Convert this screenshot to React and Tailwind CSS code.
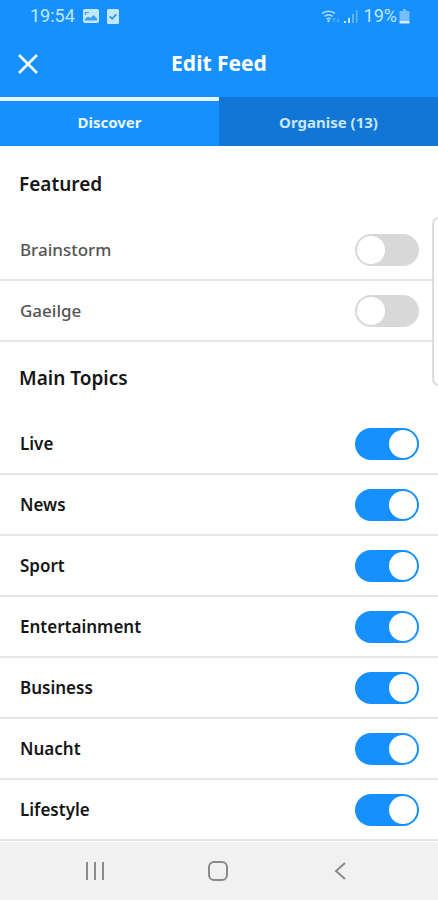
import { useState } from "react";

const sections = [
  { title: "Featured", topics: ["Brainstorm", "Gaeilge"] },
  {
    title: "Main Topics",
    topics: ["Live", "News", "Sport", "Entertainment", "Business", "Nuacht", "Lifestyle"],
  },
];

function StatusBar() {
  return (
    <div className="flex h-8 items-center justify-between pr-7 pl-[30px] font-[Roboto,sans-serif] text-lg text-[#c3e7ff]">
      <div className="flex items-center gap-2">
        <span>19:54</span>
        <svg width="16" height="14" viewBox="0 0 16 14" aria-hidden="true">
          <rect width="16" height="14" rx="2" fill="#c3e7ff" />
          <path d="M2 11.500V10l3-2.500 2.500 1.500L10.500 6 14 9.500v2z" fill="#3d9ff5" />
          <path d="M2.500 6V3.500H6" fill="none" stroke="#3d9ff5" strokeWidth="1.200" />
        </svg>
        <svg width="12" height="15" viewBox="0 0 12 15" aria-hidden="true">
          <rect width="12" height="15" rx="1.500" fill="#c3e7ff" />
          <path d="M2.800 7.200l2.400 2.600 4.200-4.600" fill="none" stroke="#1690ff" strokeWidth="1.600" />
        </svg>
      </div>
      <div className="flex items-center gap-1">
        <svg width="18" height="13" viewBox="0 0 18 13" fill="none" aria-hidden="true">
          <path d="M0 3.500Q6.500 -1 13 3.500M2.500 6.400Q6.500 3.200 10.500 6.400M4.500 9Q6.500 7.600 8.500 9" stroke="#a5d8ff" strokeWidth="1.700" />
          <circle cx="6.500" cy="11" r="1.200" fill="#a5d8ff" />
          <path d="M12 12V8M10.500 9.500L12 8l1.500 1.500M16 8v4M14.500 10.500L16 12l1.500-1.500" stroke="#58b1ff" strokeWidth="1" />
        </svg>
        <svg width="14" height="14" viewBox="0 0 14 14" aria-hidden="true">
          <path d="M0 12h2v2H0zM4 9h2v5H4z" fill="#c3e7ff" />
          <path d="M8 5h2v9H8zM12 1h1.500v13H12z" fill="#5fb5ff" />
        </svg>
        <div className="flex items-center gap-0.5 pl-0.5">
          <span>19%</span>
          <svg width="11" height="15" viewBox="0 0 11 15" aria-hidden="true">
            <path d="M4 0h3v2h2.500q1 0 1 1v8h-10V3q0-1 1-1H4z" fill="#73bfff" />
            <path d="M.5 11.500h10v3H.5z" fill="#d5efff" />
          </svg>
        </div>
      </div>
    </div>
  );
}

function TopicRow({ name, on, onToggle }) {
  return (
    <label
      className={`flex h-[61px] items-center justify-between border-b-2 border-[#e6e6e6] pr-[19px] pl-5 text-[17px] ${
        on ? "font-semibold text-[#161616]" : "font-medium text-[#555555]"
      }`}
    >
      {name}
      <input
        type="checkbox"
        role="switch"
        checked={on}
        onChange={onToggle}
        className="h-8 w-16 appearance-none rounded-full bg-[#d8d8d8] p-0.5 before:block before:size-7 before:rounded-full before:bg-white checked:bg-[#1690ff] checked:before:ml-8"
      />
    </label>
  );
}

export default function App() {
  const [enabled, setEnabled] = useState(() => new Set(sections[1].topics));
  const [tab, setTab] = useState("discover");

  const toggle = (name) => {
    const next = new Set(enabled);
    if (!next.delete(name)) next.add(name);
    setEnabled(next);
  };

  const tabClass = (id) =>
    `h-[49px] border-t-4 pb-0.5 text-[15px] font-bold ${
      tab === id
        ? "border-[#eaf6ff] bg-[#1690ff] text-[#eaf6ff]"
        : "border-[#1176d6] bg-[#1176d6] text-[#c9e6ff]"
    }`;

  return (
    <div className="relative flex min-h-screen flex-col overflow-hidden bg-white font-['Noto_Sans',sans-serif]">
      <header className="bg-[#1690ff]">
        <StatusBar />
        <div className="grid h-[65px] grid-cols-[40px_1fr_40px] items-center px-2 pb-0.5">
          <button type="button" aria-label="Close" className="flex size-10 items-center justify-center">
            <svg width="20" height="20" viewBox="0 0 20 20" aria-hidden="true">
              <path d="M1 1l18 18M19 1L1 19" stroke="white" strokeWidth="2.500" />
            </svg>
          </button>
          <h1 className="text-center text-[21px] font-bold text-white">Edit Feed</h1>
        </div>
        <div role="tablist" className="grid grid-cols-2">
          <button type="button" role="tab" aria-selected={tab === "discover"} onClick={() => setTab("discover")} className={tabClass("discover")}>
            Discover
          </button>
          <button type="button" role="tab" aria-selected={tab === "organise"} onClick={() => setTab("organise")} className={tabClass("organise")}>
            Organise (13)
          </button>
        </div>
      </header>

      <main className="flex-1 pt-0.5">
        {sections.map((section) => (
          <section key={section.title}>
            <h2 className="flex h-[72px] items-center px-[19px] text-[19px] font-semibold text-[#161616]">
              {section.title}
            </h2>
            {section.topics.map((name) => (
              <TopicRow key={name} name={name} on={enabled.has(name)} onToggle={() => toggle(name)} />
            ))}
          </section>
        ))}
      </main>

      <div className="absolute top-[217px] -right-2 h-[169px] w-3.5 rounded-lg border-2 border-[#dddddd] bg-white/80" />

      <nav className="grid h-[58px] grid-cols-[1fr_56px_1fr] items-center bg-[#f1f1f1] text-[#8a8a8a]">
        <button type="button" aria-label="Recent apps" className="flex justify-end pr-[86px]">
          <svg width="20" height="18" viewBox="0 0 20 18" stroke="currentColor" strokeWidth="2" aria-hidden="true">
            <path d="M2 0v18M10 0v18M18 0v18" />
          </svg>
        </button>
        <button type="button" aria-label="Home" className="flex justify-center pr-0.5">
          <svg width="22" height="22" viewBox="0 0 22 22" fill="none" stroke="currentColor" strokeWidth="2" aria-hidden="true">
            <rect x="2" y="2" width="18" height="18" rx="5" />
          </svg>
        </button>
        <button type="button" aria-label="Back" className="flex pl-[87px]">
          <svg width="12" height="18" viewBox="0 0 12 18" fill="none" stroke="currentColor" strokeWidth="2" aria-hidden="true">
            <path d="M11 1L2 9l9 8" />
          </svg>
        </button>
      </nav>
    </div>
  );
}
